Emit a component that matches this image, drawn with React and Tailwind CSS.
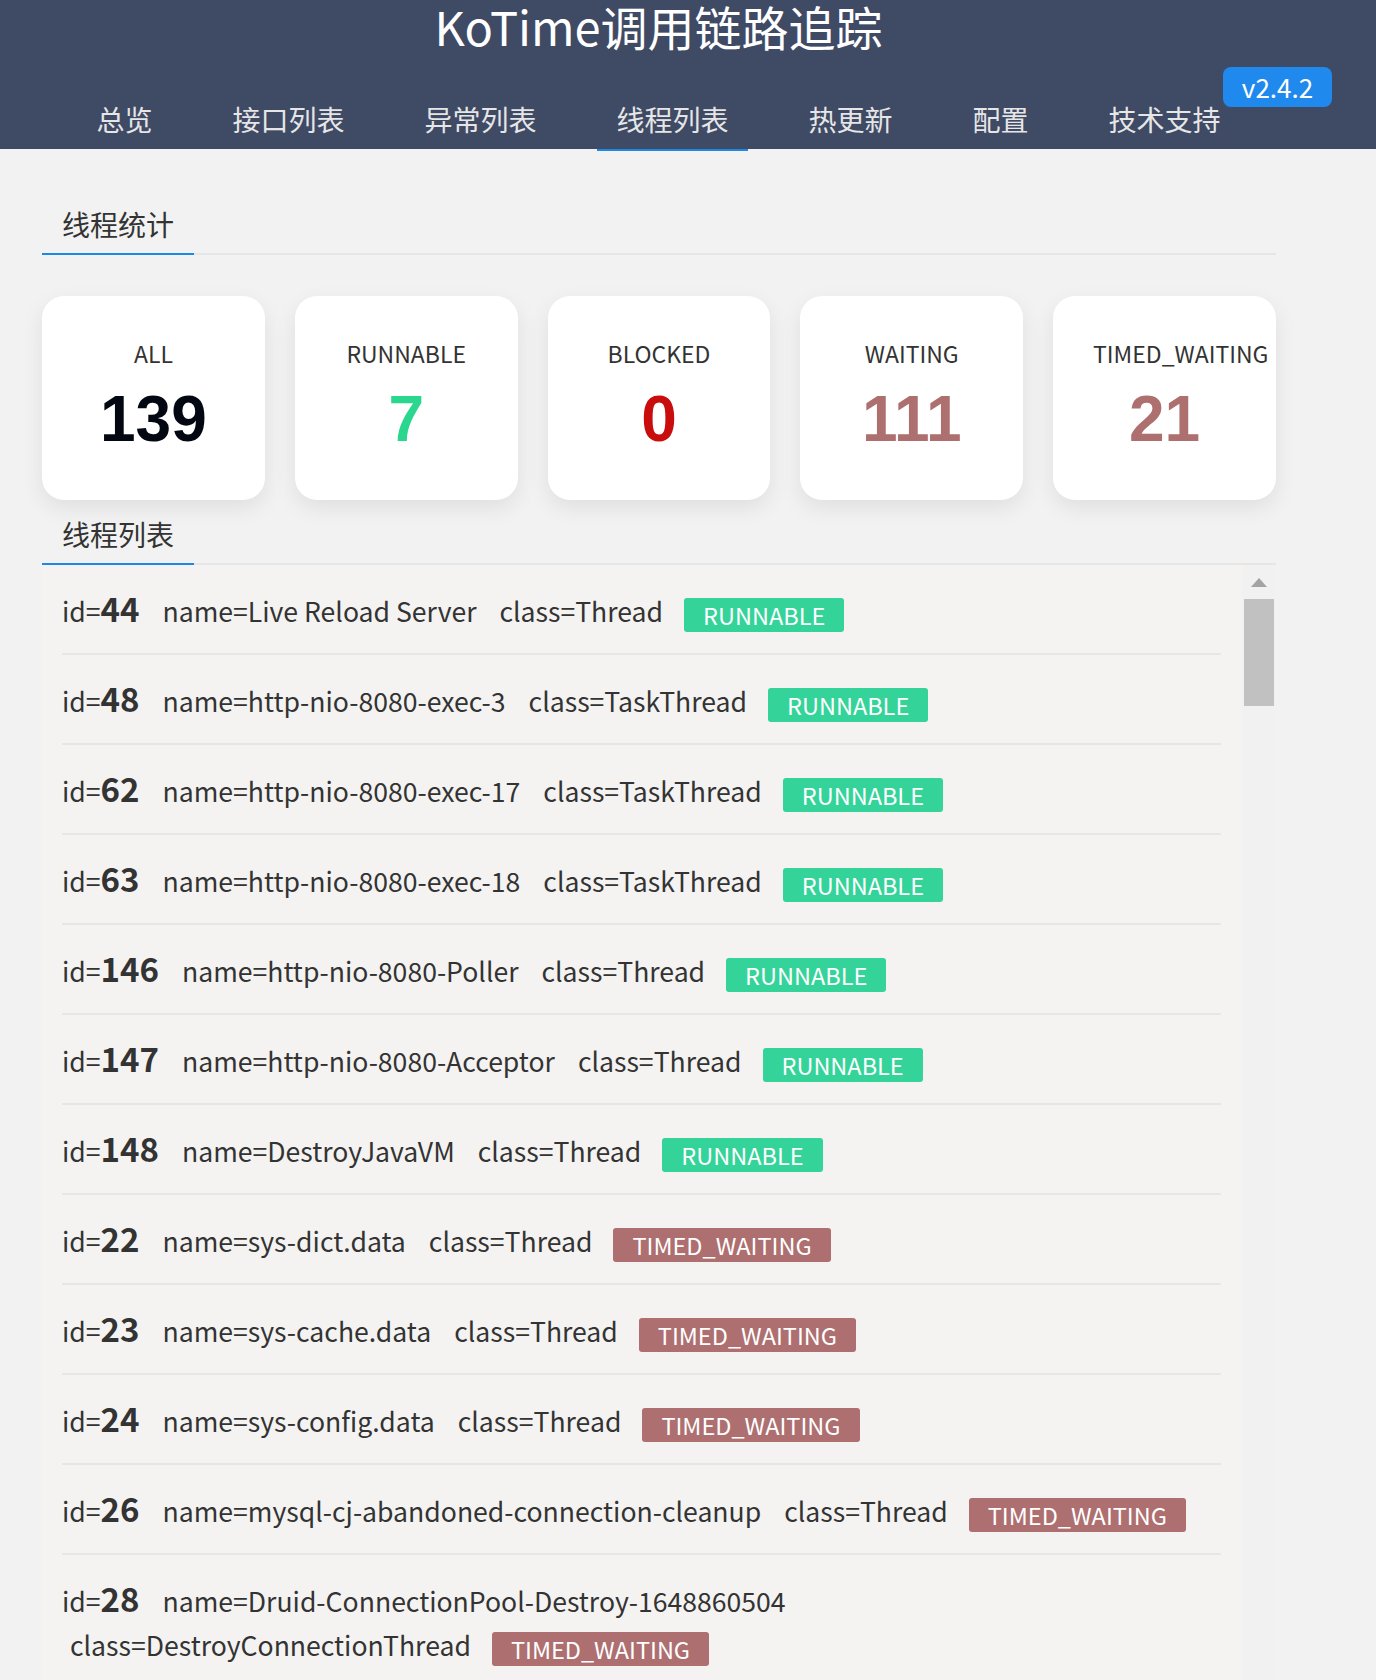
import React from 'react';

const FONT = { fontFamily: '"Noto Sans CJK SC", "Noto Sans", sans-serif' };

const navItems = ['总览', '接口列表', '异常列表', '线程列表', '热更新', '配置', '技术支持'];

const stats = [
  { label: 'ALL', value: 139, color: 'text-[#030712]' },
  { label: 'RUNNABLE', value: 7, color: 'text-[#2bd68f]' },
  { label: 'BLOCKED', value: 0, color: 'text-[#c90c0c]' },
  { label: 'WAITING', value: 111, color: 'text-[#ae6f6f]' },
  { label: 'TIMED_WAITING', value: 21, color: 'text-[#ae6f6f]' },
];

const threads = [
  { id: 44, name: 'Live Reload Server', cls: 'Thread', state: 'RUNNABLE' },
  { id: 48, name: 'http-nio-8080-exec-3', cls: 'TaskThread', state: 'RUNNABLE' },
  { id: 62, name: 'http-nio-8080-exec-17', cls: 'TaskThread', state: 'RUNNABLE' },
  { id: 63, name: 'http-nio-8080-exec-18', cls: 'TaskThread', state: 'RUNNABLE' },
  { id: 146, name: 'http-nio-8080-Poller', cls: 'Thread', state: 'RUNNABLE' },
  { id: 147, name: 'http-nio-8080-Acceptor', cls: 'Thread', state: 'RUNNABLE' },
  { id: 148, name: 'DestroyJavaVM', cls: 'Thread', state: 'RUNNABLE' },
  { id: 22, name: 'sys-dict.data', cls: 'Thread', state: 'TIMED_WAITING' },
  { id: 23, name: 'sys-cache.data', cls: 'Thread', state: 'TIMED_WAITING' },
  { id: 24, name: 'sys-config.data', cls: 'Thread', state: 'TIMED_WAITING' },
  { id: 26, name: 'mysql-cj-abandoned-connection-cleanup', cls: 'Thread', state: 'TIMED_WAITING' },
  { id: 28, name: 'Druid-ConnectionPool-Destroy-1648860504', cls: 'DestroyConnectionThread', state: 'TIMED_WAITING' },
];

const SectionTitle = ({ children, className }) => (
  <div className={`flex h-[60px] border-b-2 border-[#e6e6e6] ${className}`}>
    <div className="h-[60px] -mb-[2px] px-[20px] leading-[58px] text-[28px] text-[#333] border-b-2 border-[#1e88e5]">
      {children}
    </div>
  </div>
);

const StateBadge = ({ state }) => (
  <span
    className={`inline-block h-[34px] leading-[34px] -my-[4px] px-[19px] ml-[21px] rounded-[3px] text-[23.5px] text-white align-middle ${
      state === 'RUNNABLE' ? 'bg-[#34d399]' : 'bg-[#ad6f6f]'
    }`}
  >
    {state}
  </span>
);

const App = () => {
  return (
    <div className="w-[1376px] h-[1680px] overflow-hidden bg-[#f2f2f2]" style={FONT}>
      {/* header */}
      <div className="relative h-[149px] bg-[#3f4a65]">
        <div className="w-[1317px] flex flex-col items-center">
          <h1 className="text-[47px] leading-[52px] text-white font-normal">KoTime调用链路追踪</h1>
          <nav className="mt-[37px] flex gap-[42px]">
            {navItems.map((item) => (
              <div key={item} className="relative h-[60px] px-[19px] leading-[60px] text-[28px] text-[#e6e6e6]">
                {item}
                {item === '线程列表' && (
                  <span className="absolute left-0 right-0 -bottom-[2px] h-[2px] bg-[#1e88e5]" />
                )}
              </div>
            ))}
          </nav>
        </div>
        <span className="absolute left-[1223px] top-[67px] w-[109px] h-[40px] rounded-[8px] bg-[#2089ee] text-white text-[26px] leading-[40px] text-center">
          v2.4.2
        </span>
      </div>

      <div className="ml-[42px] w-[1234px]">
        <SectionTitle className="mt-[46px]">线程统计</SectionTitle>

        <div className="mt-[41px] grid grid-cols-5 gap-[30px]">
          {stats.map((s) => (
            <div
              key={s.label}
              className="h-[204px] rounded-[22px] bg-white shadow-[0_8px_22px_rgba(0,0,0,0.08)] flex flex-col items-center pt-[40px]"
            >
              <div className="w-[143px] text-center whitespace-nowrap text-[23px] leading-[34px] text-[#333]">{s.label}</div>
              <div
                className={`mt-[14px] text-[64px] leading-[70px] font-bold ${s.color}`}
                style={{ fontFamily: '"Liberation Sans", Arial, sans-serif' }}
              >
                {s.value}
              </div>
            </div>
          ))}
        </div>

        <SectionTitle className="mt-[5px]">线程列表</SectionTitle>

        <div className="flex bg-[#f4f3f2] h-[1200px]">
          <div className="flex-1 pl-[20px] pr-[21px]">
            {threads.map((t) => (
              <div key={t.id} className="border-b-2 border-[#e6e6e6] pt-[24px] pb-[20px] text-[26.6px] leading-[44px] text-[#333]">
                <span>
                  id=<span className="text-[33px] leading-none font-semibold">{t.id}</span>
                </span>{' '}
                <span className="ml-[17px] mr-[9px]">name={t.name}</span>{' '}
                <span className="ml-[8px] whitespace-nowrap">
                  class={t.cls}
                  <StateBadge state={t.state} />
                </span>
              </div>
            ))}
          </div>
          <div className="w-[34px] bg-[#f1f1f1] flex flex-col items-center pt-[13px]">
            <svg width="16" height="9" viewBox="0 0 16 9">
              <polygon points="8,0 16,9 0,9" fill="#a3a3a3" />
            </svg>
            <div className="mt-[12px] w-[30px] h-[107px] bg-[#c1c1c1]" />
          </div>
        </div>
      </div>
    </div>
  );
};

export default App;
